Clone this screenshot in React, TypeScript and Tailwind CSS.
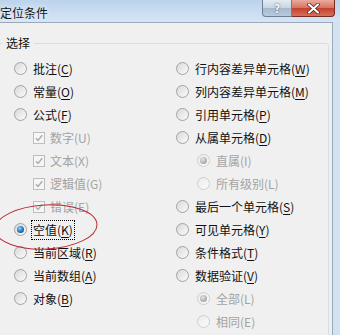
import React from 'react';

type Item = {
  label: string;
  key?: string;
  kind: 'radio' | 'check' | 'sub';
  checked?: boolean;
  disabled?: boolean;
  focus?: boolean;
};

const leftItems: Item[] = [
  { label: '批注', key: 'C', kind: 'radio' },
  { label: '常量', key: 'O', kind: 'radio' },
  { label: '公式', key: 'F', kind: 'radio' },
  { label: '数字', key: 'U', kind: 'check', checked: true, disabled: true },
  { label: '文本', key: 'X', kind: 'check', checked: true, disabled: true },
  { label: '逻辑值', key: 'G', kind: 'check', checked: true, disabled: true },
  { label: '错误', key: 'E', kind: 'check', checked: true, disabled: true },
  { label: '空值', key: 'K', kind: 'radio', checked: true, focus: true },
  { label: '当前区域', key: 'R', kind: 'radio' },
  { label: '当前数组', key: 'A', kind: 'radio' },
  { label: '对象', key: 'B', kind: 'radio' },
];

const rightItems: Item[] = [
  { label: '行内容差异单元格', key: 'W', kind: 'radio' },
  { label: '列内容差异单元格', key: 'M', kind: 'radio' },
  { label: '引用单元格', key: 'P', kind: 'radio' },
  { label: '从属单元格', key: 'D', kind: 'radio' },
  { label: '直属', key: 'I', kind: 'sub', checked: true, disabled: true },
  { label: '所有级别', key: 'L', kind: 'sub', disabled: true },
  { label: '最后一个单元格', key: 'S', kind: 'radio' },
  { label: '可见单元格', key: 'Y', kind: 'radio' },
  { label: '条件格式', key: 'T', kind: 'radio' },
  { label: '数据验证', key: 'V', kind: 'radio' },
  { label: '全部', key: 'L', kind: 'sub', checked: true, disabled: true },
  { label: '相同', key: 'E', kind: 'sub', disabled: true },
];

const Radio: React.FC<{ checked?: boolean; disabled?: boolean }> = ({ checked, disabled }) => (
  <span
    className={
      disabled
        ? 'flex h-[13px] w-[13px] shrink-0 items-center justify-center rounded-full border border-[#cfcfcf] bg-[linear-gradient(135deg,#ebebeb,#fbfbfb)]'
        : 'flex h-[13px] w-[13px] shrink-0 items-center justify-center rounded-full border border-[#a2a2a2] bg-[linear-gradient(135deg,#d9d9d9,#fbfbfb)]'
    }
  >
    {checked && (
      <span
        className={
          disabled
            ? 'h-[7px] w-[7px] rounded-full bg-[radial-gradient(circle_at_40%_35%,#e6e6e6_0%,#b4b4b4_55%,#8c8c8c_100%)]'
            : 'h-[7px] w-[7px] rounded-full bg-[radial-gradient(circle_at_40%_35%,#9ad6f7_0%,#2d80c2_45%,#0b355f_100%)]'
        }
      />
    )}
  </span>
);

const Check: React.FC = () => (
  <span className="flex h-[12px] w-[12px] shrink-0 items-center justify-center border border-[#bdbdbd] bg-[#f6f6f6]">
    <svg width="10" height="10" viewBox="0 0 10 10">
      <path d="M2 5.2 L4 7.4 L8.2 2.2" fill="none" stroke="#ababab" strokeWidth="1.4" />
    </svg>
  </span>
);

const Label: React.FC<{ item: Item }> = ({ item }) => (
  <span
    className={
      (item.disabled ? 'text-[#a3a3a3]' : 'text-[#111111]') +
      (item.focus ? ' outline outline-1 outline-dotted outline-black outline-offset-1' : '')
    }
  >
    {item.label}(
    <span className={item.disabled ? '' : 'underline underline-offset-2'}>{item.key}</span>)
  </span>
);

const Row: React.FC<{ item: Item; right?: boolean }> = ({ item, right }) => {
  if (item.kind === 'check') {
    return (
      <div className="flex h-[23px] items-center gap-[5px] pl-[33px]">
        <Check />
        <Label item={item} />
      </div>
    );
  }
  const pad = item.kind === 'sub' ? 'pl-[197px]' : right ? 'pl-[176px]' : 'pl-[14px]';
  return (
    <div className={'flex h-[23px] items-center gap-[6px] ' + pad}>
      <Radio checked={item.checked} disabled={item.disabled} />
      <Label item={item} />
    </div>
  );
};

const App: React.FC = () => {
  return (
    <div
      className="relative h-[335px] w-[340px] overflow-hidden bg-[#cfdff1] text-[12px] leading-[16px]"
      style={{ fontFamily: '"Noto Sans CJK SC", "Microsoft YaHei", sans-serif' }}
    >
      {/* title bar */}
      <div className="flex h-[22px] items-start bg-[linear-gradient(180deg,#bcd3ec,#d6e5f4)]">
        <span className="mt-[5px] text-[12px] text-[#151515] [text-shadow:0_0_6px_#ffffff]">定位条件</span>
        <div className="ml-auto mr-[5px] flex">
          <div className="flex h-[17px] w-[30px] items-center justify-center rounded-bl-[4px] border border-t-0 border-[#6e7f95] bg-[linear-gradient(180deg,#e4ebf3_0%,#c7d4e2_50%,#a7b9cd_51%,#b9cadc_100%)] text-[11px] font-bold text-white [text-shadow:0_0_2px_#33445a]">
            ?
          </div>
          <div className="flex h-[17px] w-[43px] items-center justify-center rounded-br-[4px] border border-l-0 border-t-0 border-[#7a2b22] bg-[linear-gradient(180deg,#ebab9e_0%,#d7725f_50%,#c4402b_51%,#d5705b_100%)]">
            <svg width="13" height="11" viewBox="0 0 13 11">
              <path d="M2 1.5 L11 9.5 M11 1.5 L2 9.5" stroke="#4a1a14" strokeWidth="3.6" strokeLinecap="round" />
              <path d="M2 1.5 L11 9.5 M11 1.5 L2 9.5" stroke="#ffffff" strokeWidth="2.2" strokeLinecap="round" />
            </svg>
          </div>
        </div>
      </div>

      {/* body */}
      <div className="flex h-[313px]">
        <div className="w-[333px] border-t border-r border-[#9aaabb] bg-[#f0f0f0]">
          <fieldset className="-ml-[5px] mr-[3px] mt-[12px] h-[320px] rounded-[3px] border border-[#d5dfe5]">
            <legend className="ml-[6px] px-[4px] text-[#111111]">选择</legend>
            <div className="-ml-[1px] grid grid-cols-[162px_1fr] pt-[6px]">
              <div className="flex flex-col pl-[5px]">
                {leftItems.map((it, i) => (
                  <Row key={i} item={it} />
                ))}
              </div>
              <div className="-ml-[162px] flex flex-col pl-[5px]">
                {rightItems.map((it, i) => (
                  <Row key={i} item={it} right />
                ))}
              </div>
            </div>
          </fieldset>
        </div>
        <div className="flex-1 bg-[#d3e2f2]" />
      </div>

      {/* red annotation ellipse */}
      <svg className="pointer-events-none absolute left-0 top-0" width="340" height="335">
        <ellipse cx="46" cy="227" rx="51" ry="22" fill="none" stroke="#b82b36" strokeWidth="1" transform="rotate(-3 46 227)" />
      </svg>
    </div>
  );
};

export default App;
